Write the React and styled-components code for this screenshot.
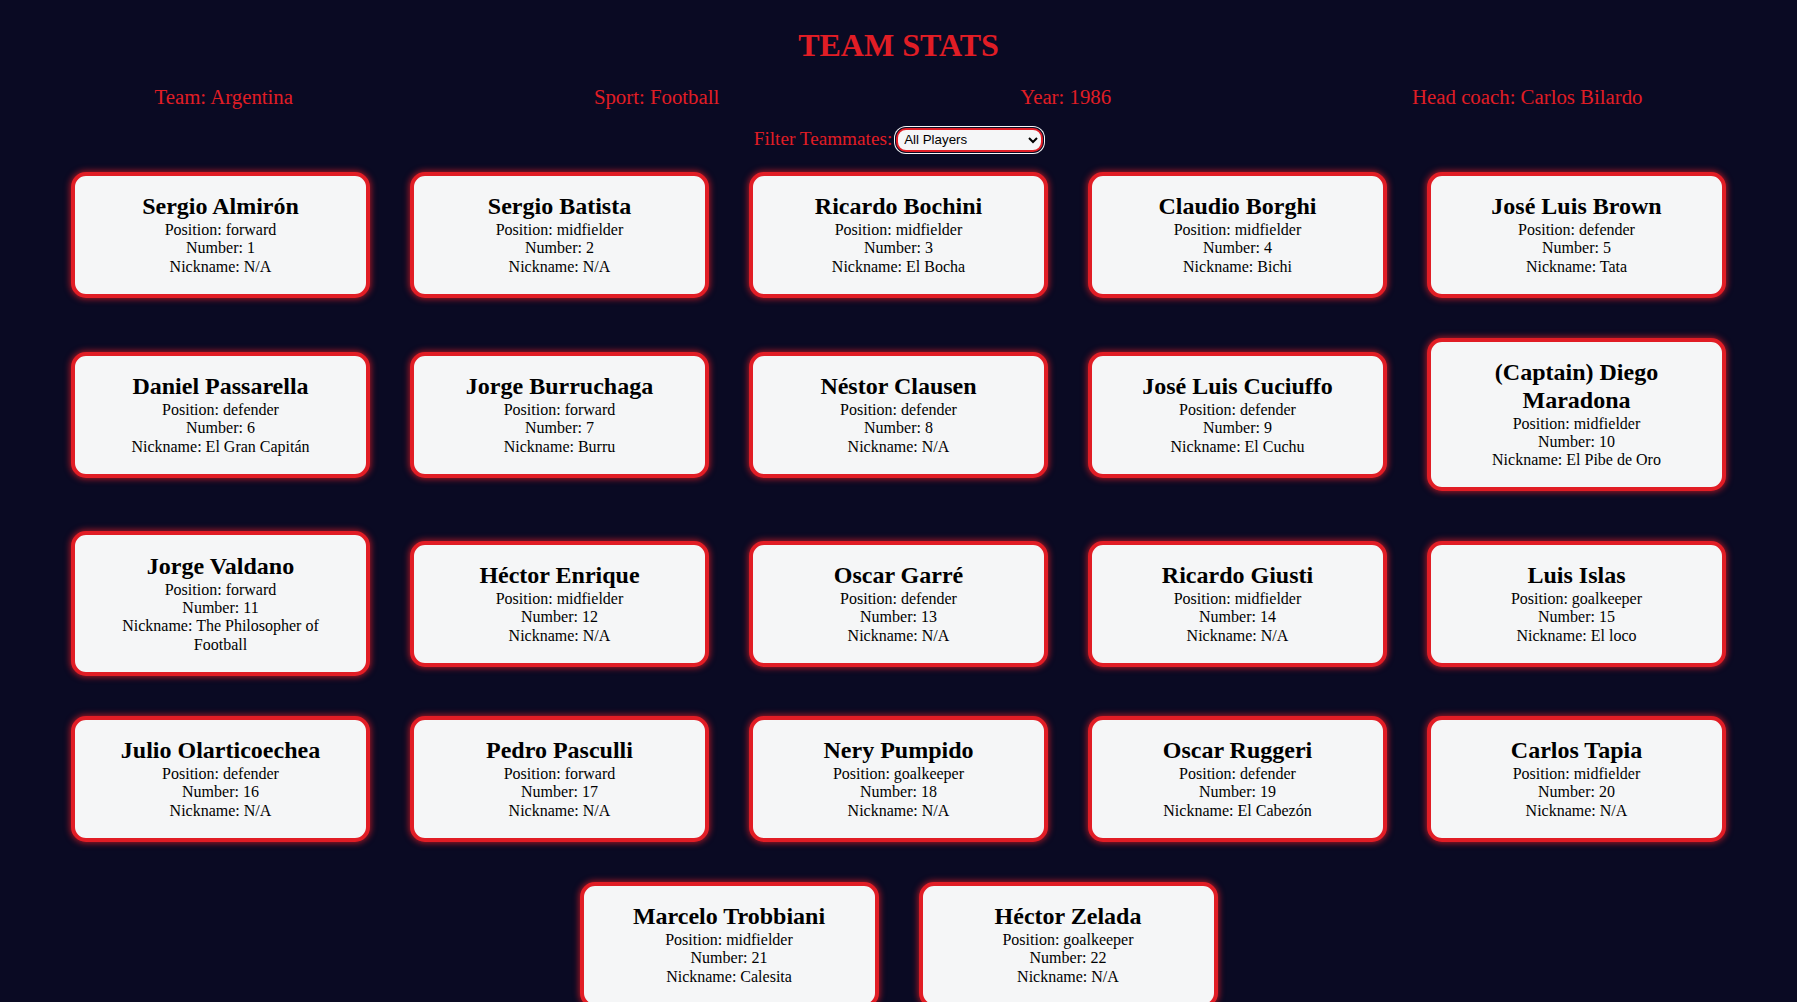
import React from "react";
import styled, { createGlobalStyle } from "styled-components";

const RED = "#e11d25";

const Global = createGlobalStyle`
  html, body { margin: 0; padding: 0; }
  body {
    background: #0a0a23;
    font-family: "Liberation Serif", "Times New Roman", serif;
    color: #0a0a23;
  }
`;

const Page = styled.main`
  padding: 27px 4px 0;
`;

const Title = styled.h1`
  margin: 0;
  text-align: center;
  font-size: 32px;
  line-height: 36.8px;
  font-weight: bold;
  color: ${RED};
`;

const Headline = styled.div`
  margin-top: 21px;
  display: flex;
  justify-content: space-around;
  font-size: 20.8px;
  line-height: 24px;
  color: ${RED};
`;

const FilterRow = styled.div`
  margin-top: 19px;
  display: flex;
  justify-content: center;
  align-items: center;
  gap: 4px;
  height: 24px;
`;

const FilterLabel = styled.label`
  font-size: 19.2px;
  color: ${RED};
  line-height: 22px;
  position: relative;
  top: -1px;
`;

const Select = styled.select`
  width: 147px;
  height: 24px;
  box-sizing: border-box;
  border: 2px solid ${RED};
  border-radius: 10px;
  background: #f5f6f7;
  font-family: "Liberation Sans", Arial, sans-serif;
  font-size: 13.33px;
  color: #000;
  box-shadow: 0 0 0 1px #0a0a23, 0 0 0 2px #f5f6f7;
  padding: 0 2px;
`;

const Cards = styled.div`
  display: flex;
  flex-wrap: wrap;
  justify-content: center;
  align-items: center;
  margin: 0 auto;
  max-width: 1700px;
`;

const Card = styled.div`
  box-sizing: border-box;
  width: 299px;
  margin: 20px;
  padding: 17.6px 20px;
  background: #f5f6f7;
  border: 4px solid ${RED};
  border-radius: 15px;
  box-shadow: 0 0 6px 1px rgba(225, 29, 37, 0.75);
  text-align: center;
  color: #000;
`;

const Name = styled.h2`
  margin: 0;
  font-size: 24px;
  line-height: 27.6px;
  font-weight: bold;
`;

const Line = styled.p`
  margin: 0;
  font-size: 16px;
  line-height: 18.4px;
`;

const players = [
  ["Sergio Almirón", "forward", 1, "N/A"],
  ["Sergio Batista", "midfielder", 2, "N/A"],
  ["Ricardo Bochini", "midfielder", 3, "El Bocha"],
  ["Claudio Borghi", "midfielder", 4, "Bichi"],
  ["José Luis Brown", "defender", 5, "Tata"],
  ["Daniel Passarella", "defender", 6, "El Gran Capitán"],
  ["Jorge Burruchaga", "forward", 7, "Burru"],
  ["Néstor Clausen", "defender", 8, "N/A"],
  ["José Luis Cuciuffo", "defender", 9, "El Cuchu"],
  ["(Captain) Diego Maradona", "midfielder", 10, "El Pibe de Oro"],
  ["Jorge Valdano", "forward", 11, "The Philosopher of Football"],
  ["Héctor Enrique", "midfielder", 12, "N/A"],
  ["Oscar Garré", "defender", 13, "N/A"],
  ["Ricardo Giusti", "midfielder", 14, "N/A"],
  ["Luis Islas", "goalkeeper", 15, "El loco"],
  ["Julio Olarticoechea", "defender", 16, "N/A"],
  ["Pedro Pasculli", "forward", 17, "N/A"],
  ["Nery Pumpido", "goalkeeper", 18, "N/A"],
  ["Oscar Ruggeri", "defender", 19, "El Cabezón"],
  ["Carlos Tapia", "midfielder", 20, "N/A"],
  ["Marcelo Trobbiani", "midfielder", 21, "Calesita"],
  ["Héctor Zelada", "goalkeeper", 22, "N/A"],
];

export default function App() {
  return (
    <>
      <Global />
      <Page>
        <Title>TEAM STATS</Title>
        <Headline>
          <span>Team: Argentina</span>
          <span>Sport: Football</span>
          <span>Year: 1986</span>
          <span>Head coach: Carlos Bilardo</span>
        </Headline>
        <FilterRow>
          <FilterLabel htmlFor="players">Filter Teammates:</FilterLabel>
          <Select id="players" defaultValue="all">
            <option value="all">All Players</option>
            <option value="nickname">Nicknames</option>
            <option value="forward">Position Forward</option>
            <option value="midfielder">Position Midfielder</option>
            <option value="defender">Position Defender</option>
            <option value="goalkeeper">Position Goalkeeper</option>
          </Select>
        </FilterRow>
        <Cards>
          {players.map(([name, pos, num, nick]) => (
            <Card key={num}>
              <Name>{name}</Name>
              <Line>Position: {pos}</Line>
              <Line>Number: {num}</Line>
              <Line>Nickname: {nick}</Line>
            </Card>
          ))}
        </Cards>
      </Page>
    </>
  );
}
